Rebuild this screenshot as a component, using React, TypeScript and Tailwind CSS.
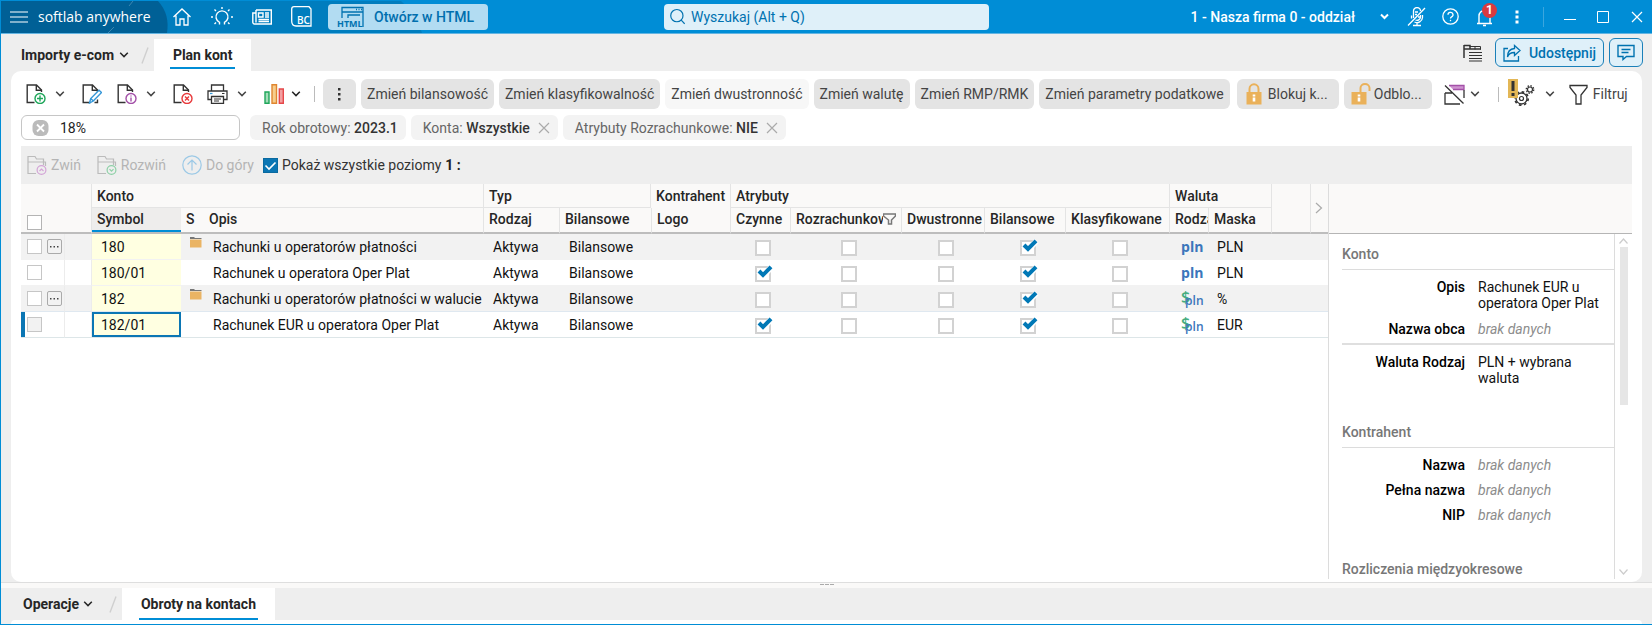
import React, { useState } from "react";

type Konto = {
  symbol: string;
  opis: string;
  grupa: boolean;
  czynne: boolean;
  waluta: "pln" | "obca";
  maska: string;
};

const KONTA: Konto[] = [
  { symbol: "180", opis: "Rachunki u operatorów płatności", grupa: true, czynne: false, waluta: "pln", maska: "PLN" },
  { symbol: "180/01", opis: "Rachunek u operatora Oper Plat", grupa: false, czynne: true, waluta: "pln", maska: "PLN" },
  { symbol: "182", opis: "Rachunki u operatorów płatności w walucie", grupa: true, czynne: false, waluta: "obca", maska: "%" },
  { symbol: "182/01", opis: "Rachunek EUR u operatora Oper Plat", grupa: false, czynne: true, waluta: "obca", maska: "EUR" },
];

const AKCJE = [
  { label: "Zmień bilansowość", disabled: false },
  { label: "Zmień klasyfikowalność", disabled: false },
  { label: "Zmień dwustronność", disabled: true },
  { label: "Zmień walutę", disabled: false },
  { label: "Zmień RMP/RMK", disabled: false },
  { label: "Zmień parametry podatkowe", disabled: false },
];

function Chevron({ className = "" }: { className?: string }) {
  return (
    <svg className={`shrink-0 ${className}`} width="10" height="8" viewBox="0 0 10 8" fill="none" stroke="currentColor" strokeWidth="1.5">
      <path d="M1.2 1.8 5 5.6 8.8 1.8" />
    </svg>
  );
}

function Close({ className = "" }: { className?: string }) {
  return (
    <svg className={`shrink-0 ${className}`} width="12" height="12" viewBox="0 0 12 12" fill="none" stroke="currentColor" strokeWidth="1.2">
      <path d="M1 1l10 10M11 1L1 11" />
    </svg>
  );
}

function DocIcon({ children }: { children: React.ReactNode }) {
  return (
    <svg width="20" height="20" viewBox="0 0 20 20" fill="none" strokeWidth="1.4">
      <path d="M8.5 18.5H1.2V1H10.5L15.5 6V8" stroke="#333" />
      <path d="M10.3 1V6.2H15.5" stroke="#333" />
      {children}
    </svg>
  );
}

function FolderIcon({ color, up }: { color: string; up?: boolean }) {
  return (
    <svg width="20" height="20" viewBox="0 0 20 20" fill="none" strokeWidth="1.2">
      <path d="M9 18.5H1V1.5H8L9.5 4H16.5V10M1 7H18.5V11" stroke="#bbb" />
      <circle cx="14.5" cy="15" r="4.4" stroke={color} />
      <path d={up ? "M12.5 16l2-2 2 2" : "M12.5 14.2l2 2 2-2"} stroke={color} />
    </svg>
  );
}

function Padlock({ open }: { open?: boolean }) {
  return (
    <svg className="shrink-0" width="20" height="22" viewBox="0 0 20 22" fill="none">
      <path d={open ? "M9.5 9V5a4.5 4 0 0 1 9 0v3" : "M3.5 9V6a4.5 4.7 0 0 1 9 0v3"} stroke="#eab15a" strokeWidth="2" />
      <rect x="0.5" y="9" width="15" height="12.5" fill="#eab15a" />
      <path d="M8 11.5v2M8 14.5v4" stroke="#fff" strokeWidth="2.6" />
    </svg>
  );
}

function Tick({ label, checked }: { label: string; checked?: boolean }) {
  return (
    <label className="relative inline-block h-4 w-4 align-middle">
      <input
        type="checkbox"
        aria-label={label}
        defaultChecked={checked}
        className="peer block h-4 w-4 appearance-none border-2 border-[#d2d2d2] bg-white"
      />
      <svg className="pointer-events-none absolute -top-1 left-0 hidden peer-checked:block" width="20" height="20" viewBox="0 0 20 20" fill="none">
        <path d="M3.5 9.5L8 14L16.5 5" stroke="#fff" strokeWidth="6" />
        <path d="M4 9L8 13L16 4.8" stroke="#0078b6" strokeWidth="4" />
      </svg>
    </label>
  );
}

function WalutaIcon({ rodzaj }: { rodzaj: "pln" | "obca" }) {
  if (rodzaj === "pln")
    return <span className="block font-['Open_Sans',sans-serif] text-sm leading-4 font-bold text-[#3b76bb]">pln</span>;
  return (
    <span className="relative block h-5 w-5 font-['Open_Sans',sans-serif]">
      <span className="absolute top-0 left-0 text-base leading-4 font-semibold text-[#45ad7e]">$</span>
      <span className="absolute top-1 left-1 text-xs leading-4 font-semibold text-[#3b76bb]">pln</span>
    </span>
  );
}

function Th({ children, className = "", colSpan }: { children?: React.ReactNode; className?: string; colSpan?: number }) {
  return (
    <th colSpan={colSpan} className={`h-6 overflow-hidden border-[#e4e4e4] px-[5px] text-left font-medium ${className}`}>
      {children}
    </th>
  );
}

function TopBar() {
  return (
    <header className="relative flex h-[34px] shrink-0 items-center border-b border-[#64b5e2] bg-[#008dd6] text-white">
      <svg className="absolute top-0 left-0" width="430" height="33" viewBox="0 0 430 33" fill="none">
        <path d="M0 1H400Q416 14 421 33H0Z" fill="#007dbe" />
        <path d="M0 1H157Q169 14 166 33H0Z" fill="#006096" />
        <path d="M132 1l-4 5M113 27l-6 6" stroke="#3d87b1" />
      </svg>
      <div className="relative flex flex-1 items-center pl-2">
        <button aria-label="Menu">
          <svg width="20" height="14" viewBox="0 0 20 14" stroke="#fff" strokeWidth="1.2">
            <path d="M1 2h18M1 7h18M1 12h18" />
          </svg>
        </button>
        <span className="ml-[9px] w-[125px] font-['Open_Sans',sans-serif] text-sm font-medium whitespace-nowrap">softlab anywhere</span>
        <div className="ml-[9px] flex items-center gap-[19px]">
          <button aria-label="Start">
            <svg width="20" height="20" viewBox="0 0 20 20" fill="none" stroke="#fff" strokeWidth="1.3">
              <path d="M1.5 10L10 2l8.5 8M4 8.5V18h4v-6h4v6h4V8.5" />
            </svg>
          </button>
          <button aria-label="Podpowiedzi">
            <svg width="22" height="20" viewBox="0 0 22 20" fill="none" stroke="#fff" strokeWidth="1.4">
              <path d="M8.5 17.5v-2.2a6 6 0 1 1 5 0v2.2" />
              <path d="M11 0v2M3.500 2.5l1.5 1.5M18.5 2.5L17 4M0 10h2M20 10h2M3.5 17l1.5-1.5M18.5 17L17 15.5" />
            </svg>
          </button>
          <button aria-label="Aktualności">
            <svg width="20" height="20" viewBox="0 0 20 20" fill="none" stroke="#fff" strokeWidth="1.4">
              <path d="M4 3h15.3v14H2.5A1.8 1.8 0 0 1 .8 15V6H4M4 3v12.5" />
              <path d="M6.5 6h4.5v4H6.5zM13 6h4M13 8h4M13 10h4M6.5 12.5h10.5M6.5 14.5h10.5" />
            </svg>
          </button>
          <button aria-label="BC">
            <svg width="21" height="21" viewBox="0 0 21 21" fill="none">
              <path d="M.7 3Q.7.7 3 .7H18L20 3V20H5Q.7 20 .7 15Z" stroke="#fff" strokeWidth="1.3" />
              <text x="6" y="17.5" fontSize="10" fontFamily="Open Sans" fontWeight="600" fill="#fff">BC</text>
            </svg>
          </button>
        </div>
        <button className="ml-4 flex h-[26px] w-40 items-center gap-2 rounded bg-[#b2dcf2] pl-[9px] text-sm font-medium text-[#006fae]">
          <svg width="29" height="22" viewBox="0 0 29 22" fill="none" stroke="#0072b0" strokeWidth="1.3">
            <path d="M5 12V1.5H26V21M5 6H26M19 3.5h1M21.5 3.5h1M24 3.5h1M11 12V9H23" />
            <text x="0" y="20.5" fontSize="9" fontFamily="Open Sans" fontWeight="700" fill="#0072b0" stroke="none">HTML</text>
          </svg>
          Otwórz w HTML
        </button>
      </div>
      <label className="relative flex h-[26px] w-[325px] items-center rounded bg-[#dff0f9] text-[#0072b0]">
        <svg className="mx-1.5" width="17" height="18" viewBox="0 0 17 18" fill="none" stroke="currentColor" strokeWidth="1.3">
          <circle cx="7.5" cy="7.5" r="6.7" />
          <path d="M12.3 12.5L16 16.5" />
        </svg>
        <input
          aria-label="Wyszukaj"
          placeholder="Wyszukaj (Alt + Q)"
          className="w-full bg-transparent text-sm outline-none placeholder:text-[#0072b0]"
        />
      </label>
      <div className="flex flex-1 items-center justify-end pr-[9px]">
        <button className="flex items-center gap-[25px] text-sm font-medium">
          1 - Nasza firma 0 - oddział
          <svg width="9" height="7" viewBox="0 0 9 7" fill="none" stroke="#fff" strokeWidth="2">
            <path d="M1 1.5L4.5 5 8 1.5" />
          </svg>
        </button>
        <button aria-label="Mikrofon" className="ml-[18px]">
          <svg width="19" height="20" viewBox="0 0 19 20" fill="none" stroke="#fff" strokeWidth="1.3">
            <path d="M1 18.5L18 1" />
            <path d="M6.5 11V4a3.5 3.5 0 0 1 7 0M13.5 8v2a3.5 3.5 0 0 1-5 3M4.5 8.5v3M15.5 8v2.5a5.5 5.5 0 0 1-8 4.5M10 16v2.5M6 18.5h8" />
            <path d="M8 5h3M8 7.5h2M11 10h2" />
          </svg>
        </button>
        <button aria-label="Pomoc" className="ml-4">
          <svg width="17" height="17" viewBox="0 0 17 17" fill="none" stroke="#fff" strokeWidth="1.3">
            <circle cx="8.5" cy="8.5" r="7.7" />
            <path d="M6 6.8a2.5 2.3 0 1 1 3.6 2Q8.5 9.3 8.5 10.5" />
            <path d="M8.5 11.8v1.4" />
          </svg>
        </button>
        <button aria-label="Powiadomienia" className="relative ml-[17px]">
          <svg width="17" height="20" viewBox="0 0 17 20" fill="none" stroke="#fff" strokeWidth="1.4">
            <path d="M1 16.5h15M3 16.5V9a5.5 5.5 0 0 1 11 0v7.5M7 18.5h3" />
          </svg>
          <span className="absolute -top-1 left-1.5 flex h-[15px] w-[15px] items-center justify-center rounded-full bg-[#d93a3f] text-xs leading-none font-bold">
            1
          </span>
        </button>
        <button aria-label="Więcej" className="ml-[22px]">
          <svg width="4" height="14" viewBox="0 0 4 14" fill="#fff">
            <path d="M.5.5h3v3h-3zM.5 5.5h3v3h-3zM.5 10.5h3v3h-3z" />
          </svg>
        </button>
        <span className="ml-6 h-5 w-px bg-[#3ba6de]" />
        <button aria-label="Minimalizuj" className="ml-5">
          <svg width="12" height="12" viewBox="0 0 12 12" stroke="#fff">
            <path d="M0 8.5h12" />
          </svg>
        </button>
        <button aria-label="Maksymalizuj" className="ml-[21px]">
          <svg width="12" height="12" viewBox="0 0 12 12" fill="none" stroke="#fff">
            <path d="M.5.5h11v11H.5z" />
          </svg>
        </button>
        <button aria-label="Zamknij" className="ml-[22px]">
          <Close />
        </button>
      </div>
    </header>
  );
}

function Slash() {
  return (
    <svg width="8" height="17" viewBox="0 0 8 17" stroke="#cfcfcf" strokeWidth="1.4">
      <path d="M1 16.5L7 .5" />
    </svg>
  );
}

function PageTabs() {
  return (
    <nav className="flex h-[37px] shrink-0 items-end pr-[9px] pl-5">
      <button className="flex h-8 items-center gap-[5px] text-sm font-bold text-[#262626]">
        Importy e-com
        <Chevron />
      </button>
      <span className="ml-3 flex h-8 w-[13px] items-center">
        <Slash />
      </span>
      <button className="flex h-8 w-[97px] flex-col items-center justify-end bg-white pb-0.5 text-sm font-bold text-[#262626]">
        <span className="border-b-2 border-[#008dd6] px-[3px] pb-0.5">Plan kont</span>
      </button>
      <div className="ml-auto flex h-[37px] items-center gap-[5px]">
        <button aria-label="Układ" className="mr-2">
          <svg width="19" height="18" viewBox="0 0 19 18" fill="none" stroke="#333">
            <path d="M6.500 2.5H12V5.5M12 2.5H17.5V5.5M6 8.5h13M6 11.5h13M6 14.5h13M6 17h13" />
            <path d="M1 1.5h6v3.500M1 5h17M1 1v13" strokeWidth="1.5" />
          </svg>
        </button>
        <button className="flex h-[29px] items-center gap-2 rounded-md border border-[#1b80b9] bg-[#dff0f9] px-[7px] text-sm font-medium text-[#0072b0]">
          <svg width="18" height="18" viewBox="0 0 18 18" fill="none" stroke="currentColor" strokeWidth="1.3">
            <path d="M5 4.5H1V17H15.5V12" />
            <path d="M11.5 1.5L17 6.5L11.5 11.5V8.5Q6 8.5 4.5 13Q4.5 5 11.5 4.5Z" />
          </svg>
          Udostępnij
        </button>
        <button aria-label="Komentarze" className="flex h-[29px] w-[34px] items-center justify-center rounded-md border border-[#1b80b9] bg-[#dff0f9] text-[#0072b0]">
          <svg width="18" height="17" viewBox="0 0 18 17" fill="none" stroke="currentColor" strokeWidth="1.4">
            <path d="M1 1.5H17V12.5H9.5L6 15.5V12.5H1ZM4.5 5.5h9M4.5 8.5h7" />
          </svg>
        </button>
      </div>
    </nav>
  );
}

function Toolbar() {
  return (
    <div className="flex h-[30px] items-center text-sm whitespace-nowrap text-[#444]">
      <div className="flex w-[291px] shrink-0 items-center pl-[5px]">
        <button aria-label="Dodaj" className="flex items-center gap-[9px]">
          <DocIcon>
            <circle cx="14" cy="14.5" r="5" stroke="#1ea65a" />
            <path d="M14 11.5v6M11 14.5h6" stroke="#1ea65a" />
          </DocIcon>
          <Chevron />
        </button>
        <button aria-label="Edytuj" className="ml-[17px]">
          <DocIcon>
            <path d="M12.500 18.500h3v-3" stroke="#333" />
            <path d="M7.500 19l1.200-4.500 8.300-8.300 2.500 2.300-8.200 8.500z" stroke="#3597d8" fill="#fff" />
            <path d="M8.700 14.500l2.600 2.500" stroke="#3597d8" />
          </DocIcon>
        </button>
        <button aria-label="Informacje" className="ml-[15px] flex items-center gap-[9px]">
          <DocIcon>
            <circle cx="14" cy="14.5" r="5" stroke="#a350a8" />
            <path d="M14 11.5v1M14 13.5v4" stroke="#a350a8" />
          </DocIcon>
          <Chevron />
        </button>
        <button aria-label="Usuń" className="ml-[17px]">
          <DocIcon>
            <circle cx="14" cy="14.5" r="5" stroke="#e8393b" />
            <path d="M12 12.5l4 4M16 12.5l-4 4" stroke="#e8393b" />
          </DocIcon>
        </button>
        <button aria-label="Drukuj" className="ml-[14px] flex items-center gap-[9px]">
          <svg width="21" height="20" viewBox="0 0 21 20" fill="none" stroke="#333" strokeWidth="1.3">
            <path d="M4.5 7V1H16.5V7M4 15.5H1V7H20V15.5H17M4.5 12.5H16.5V19.3H4.5Z" />
            <path d="M7 15h7M7 17h5M15 9.5h2.5" strokeWidth="1" />
            <path d="M3 9.5h2.5" stroke="#3597d8" />
          </svg>
          <Chevron />
        </button>
        <button aria-label="Wykresy" className="ml-[17px] flex items-center gap-[6px]">
          <svg width="21" height="20" viewBox="0 0 21 20" strokeWidth="1.4">
            <path d="M1 8h4v11.3H1z" fill="#a5dcb9" stroke="#1ea65a" />
            <path d="M8 .7h4.5v18.6H8z" fill="#f6cd8c" stroke="#e0852f" />
            <path d="M15.3 5h4v14.3h-4z" fill="#f3a0a1" stroke="#e5484a" />
          </svg>
          <Chevron className="text-[#222]" />
        </button>
      </div>
      <span className="mx-0.5 h-4 w-px bg-[#bbb]" />
      <div className="ml-[6px] flex items-center gap-[5px]">
        <button aria-label="Więcej akcji" className="flex h-[30px] w-[33px] items-center justify-center rounded-md bg-[#e4e4e4]">
          <svg width="3" height="13" viewBox="0 0 3 13" fill="#333">
            <path d="M0 0h2.5v2.5H0zM0 5h2.5v2.5H0zM0 10h2.5v2.5H0z" />
          </svg>
        </button>
        {AKCJE.map((a) => (
          <button
            key={a.label}
            disabled={a.disabled}
            className={`h-[30px] rounded-md px-[6px] ${a.disabled ? "bg-[#f7f7f7]" : "bg-[#e4e4e4]"}`}
          >
            {a.label}
          </button>
        ))}
        <button className="ml-0.5 flex h-[30px] w-[102px] items-center gap-[2px] rounded-md bg-[#e4e4e4] pl-[9px]">
          <Padlock />
          Blokuj k...
        </button>
        <button className="flex h-[30px] w-[88px] items-center gap-[3px] rounded-md bg-[#e4e4e4] pl-[7px]">
          <Padlock open />
          Odblo...
        </button>
      </div>
      <button aria-label="Okna" className="ml-3 flex items-center gap-[5px]">
        <svg width="21" height="21" viewBox="0 0 21 21" fill="none" stroke="#333" strokeWidth="1.3">
          <path d="M5 1.5H20V5.5H9" fill="#cf93d0" stroke="#a350a8" />
          <path d="M20 6V14M1 9V20H16M1 9H8M1 1.5L19.5 19.5" />
        </svg>
        <Chevron />
      </button>
      <span className="ml-[18px] h-[15px] w-px bg-[#bbb]" />
      <button aria-label="Ustawienia" className="relative ml-[9px] flex items-center gap-[9px]">
        <svg width="28" height="30" viewBox="0 0 28 30" fill="none" stroke="#333">
          <circle cx="13.5" cy="19.5" r="5.5" strokeWidth="1.3" />
          <circle cx="13.5" cy="19.5" r="6.7" strokeWidth="1.7" strokeDasharray="2.6 2.66" />
          <circle cx="13.5" cy="19.5" r="2" strokeWidth="1.2" />
          <circle cx="22" cy="10.5" r="2.5" strokeWidth="1.2" />
          <circle cx="22" cy="10.5" r="3.7" strokeWidth="1.4" strokeDasharray="1.45 1.45" />
          <path d="M0 0h10v19H0z" fill="#e3b756" stroke="none" />
          <path d="M5 2v10M5 14v3" strokeWidth="3" />
        </svg>
        <Chevron />
      </button>
      <button className="ml-[14px] flex items-center gap-[5px]">
        <svg width="19" height="21" viewBox="0 0 19 21" fill="none" stroke="#333" strokeWidth="1.3">
          <path d="M1 1.5H18V3.5L12 11V20H7V11L1 3.5Z" />
        </svg>
        Filtruj
      </button>
    </div>
  );
}

function Chip({ name, value, closable }: { name: string; value: string; closable?: boolean }) {
  return (
    <span className="flex h-[25px] items-center rounded-md bg-[#f3f3f3] pr-2 pl-3 text-sm whitespace-pre text-[#666]">
      {name}: <span className="font-medium text-[#333]">{value}</span>
      {closable && (
        <button aria-label={`Usuń filtr ${name}`} className="ml-2 text-[#aaa]">
          <Close />
        </button>
      )}
    </span>
  );
}

function Filters() {
  const [query, setQuery] = useState("18%");

  return (
    <div className="mt-[6px] flex items-center gap-[5px]">
      <div className="mr-[5px] flex h-[25px] w-[219px] items-center rounded-md border border-[#c6c6c6] bg-white pl-2.5">
        <button aria-label="Wyczyść" onClick={() => setQuery("")}>
          <svg width="17" height="16" viewBox="0 0 17 16">
            <rect x=".5" width="16" height="16" rx="6" fill="#bbb" />
            <path d="M5 4.5l7 7M12 4.5l-7 7" stroke="#fff" strokeWidth="1.8" />
          </svg>
        </button>
        <input
          aria-label="Szukaj konta"
          value={query}
          onChange={(e) => setQuery(e.target.value)}
          className="ml-[11px] w-full min-w-0 bg-transparent text-sm text-[#222] outline-none"
        />
      </div>
      <Chip name="Rok obrotowy" value="2023.1" />
      <Chip name="Konta" value="Wszystkie" closable />
      <Chip name="Atrybuty Rozrachunkowe" value="NIE" closable />
    </div>
  );
}

function LevelBar() {
  return (
    <div className="mt-[6px] flex h-[38px] shrink-0 items-center bg-[#eee] pl-[6px] text-sm text-[#b4b4b4]">
      <button disabled className="flex items-center gap-1">
        <FolderIcon color="#d3a4d6" up />
        Zwiń
      </button>
      <button disabled className="ml-4 flex items-center gap-1">
        <FolderIcon color="#8ed0a7" />
        Rozwiń
      </button>
      <button disabled className="ml-4 flex items-center gap-1">
        <svg width="20" height="20" viewBox="0 0 20 20" fill="none" stroke="#9cc9e6" strokeWidth="1.2">
          <circle cx="10" cy="10" r="9.2" />
          <path d="M10 15.5V5M5.5 9.5L10 5l4.5 4.5" />
        </svg>
        Do góry
      </button>
      <label className="ml-[9px] flex items-center gap-1 text-[#333]">
        <span className="relative block h-[15px] w-[15px]">
          <input type="checkbox" defaultChecked className="block h-[15px] w-[15px] appearance-none border border-[#0a6aa0] bg-[#0b76b4]" />
          <svg className="pointer-events-none absolute inset-0" width="15" height="15" viewBox="0 0 15 15" fill="none" stroke="#fff" strokeWidth="1.6">
            <path d="M2.5 7.5L6 11L12.5 4.5" />
          </svg>
        </span>
        Pokaż wszystkie poziomy
      </label>
      <span className="ml-1 font-bold text-[#222]">1 :</span>
    </div>
  );
}

function AccountsTable() {
  return (
    <div className="min-w-0 flex-1">
      <table className="w-full table-fixed border-separate border-spacing-0 text-sm whitespace-nowrap">
        <colgroup>
          <col className="w-[44px]" />
          <col className="w-[27px]" />
          <col className="w-[89px]" />
          <col className="w-[23px]" />
          <col className="w-[280px]" />
          <col className="w-[76px]" />
          <col className="w-[91px]" />
          <col className="w-[80px]" />
          <col className="w-[60px]" />
          <col className="w-[111px]" />
          <col className="w-[83px]" />
          <col className="w-[81px]" />
          <col className="w-[104px]" />
          <col className="w-[39px]" />
          <col className="w-[63px]" />
          <col />
          <col className="w-[17px]" />
        </colgroup>
        <thead className="bg-[#faf9f8] text-[#262626]">
          <tr>
            <th colSpan={2} rowSpan={2} className="border-r border-b-2 border-r-[#e4e4e4] border-b-[#bdbdbd] px-[6px] pb-[2px] text-left align-bottom">
              <input type="checkbox" aria-label="Zaznacz wszystkie" className="block h-[15px] w-[15px] appearance-none border border-[#b4b4b4] bg-white" />
            </th>
            <Th colSpan={3} className="border-r border-b">Konto</Th>
            <Th colSpan={2} className="border-r border-b">Typ</Th>
            <Th className="border-r">Kontrahent</Th>
            <Th colSpan={5} className="border-r border-b">Atrybuty</Th>
            <Th colSpan={2} className="border-r border-b">Waluta</Th>
            <th rowSpan={2} className="border-r border-b-2 border-r-[#e4e4e4] border-b-[#bdbdbd]" />
            <th rowSpan={2} className="border-b-2 border-b-[#bdbdbd]">
              <button aria-label="Zwiń panel" className="block pl-1 text-[#aaa]">
                <svg width="8" height="12" viewBox="0 0 8 12" fill="none" stroke="currentColor" strokeWidth="1.2">
                  <path d="M1 1l5.5 5L1 11" />
                </svg>
              </button>
            </th>
          </tr>
          <tr className="[&>th]:h-[26px] [&>th]:border-b-2 [&>th]:border-b-[#bdbdbd] [&>th]:pb-[2px]">
            <Th className="bg-[#eeedec] shadow-[inset_0_-2px_0_#008dd6]">Symbol</Th>
            <Th>S</Th>
            <Th className="border-r">Opis</Th>
            <Th className="border-r">Rodzaj</Th>
            <Th>Bilansowe</Th>
            <Th className="border-x">Logo</Th>
            <Th className="border-r">Czynne</Th>
            <Th className="border-r">
              <span className="flex items-center justify-between">
                <span className="w-[88px] overflow-hidden">Rozrachunkowe</span>
                <svg className="shrink-0" width="13" height="12" viewBox="0 0 13 12" fill="none" stroke="#777" strokeWidth="1.5">
                  <path d="M.5 1H12.5V3L8.5 7V11H5.5V7L.5 3Z" />
                </svg>
              </span>
            </Th>
            <Th className="border-r">Dwustronne</Th>
            <Th className="border-r">Bilansowe</Th>
            <Th className="border-r">Klasyfikowane</Th>
            <Th className="border-r">Rodzaj</Th>
            <Th className="border-r">Maska</Th>
          </tr>
        </thead>
        <tbody className="text-[#111]">
          {KONTA.map((k, index) => {
            const active = index === KONTA.length - 1;

            return (
              <tr
                key={k.symbol}
                className={`[&>td]:h-[26px] [&>td]:border-b [&>td]:p-0 ${
                  active
                    ? "[&>td]:border-b-[#dde6e8]"
                    : index === 2
                    ? "bg-[#f2f2f2] [&>td]:border-b-[#dfe8f0]"
                    : k.grupa
                    ? "bg-[#f2f2f2] [&>td]:border-b-[#f2f2f2]"
                    : "[&>td]:border-b-[#f2f2f2]"
                }`}
              >
                <td className={`border-r border-r-[#ececec] ${active ? "shadow-[inset_4px_0_0_#0b76b4]" : ""}`}>
                  <span className="flex items-center gap-[5px] pl-[6px]">
                    <input
                      type="checkbox"
                      aria-label={`Zaznacz ${k.symbol}`}
                      className={`block h-[15px] w-[15px] appearance-none border border-[#c6c6c6] ${active ? "bg-[#f2f2f2]" : "bg-white"}`}
                    />
                    {k.grupa && (
                      <button aria-label="Rozwiń" className="flex h-[15px] w-[15px] items-center justify-center rounded-xs border border-[#aaa]">
                        <svg width="9" height="2" viewBox="0 0 9 2" fill="#444">
                          <path d="M0 0h1.5v1.5H0zM3.5 0H5v1.5H3.5zM7 0h1.5v1.5H7z" />
                        </svg>
                      </button>
                    )}
                  </span>
                </td>
                <td className="border-r border-r-[#ececec]" />
                <td className="bg-[#ffffe1]">
                  <span className={`flex h-[25px] items-center pl-[9px] ${active ? "shadow-[inset_0_0_0_2px_#0b76b4]" : ""}`}>{k.symbol}</span>
                </td>
                <td className="align-top">
                  {k.grupa && (
                    <svg className="mt-[3px] ml-[9px]" width="12" height="11" viewBox="0 0 12 11">
                      <path d="M0 0h4l1 1h6.5v1H0z" fill="#777" />
                      <path d="M0 2.5h11.5v8H0z" fill="#eab464" />
                    </svg>
                  )}
                </td>
                <td>
                  <span className="pl-[9px]">{k.opis}</span>
                </td>
                <td>
                  <span className="pl-[9px]">Aktywa</span>
                </td>
                <td>
                  <span className="pl-[9px]">Bilansowe</span>
                </td>
                <td />
                <td className="text-center">
                  <span className="pl-1"><Tick label="Czynne" checked={k.czynne} /></span>
                </td>
                <td className="text-center">
                  <span className="pl-1"><Tick label="Rozrachunkowe" /></span>
                </td>
                <td className="text-center">
                  <span className="pl-1"><Tick label="Dwustronne" /></span>
                </td>
                <td className="text-center">
                  <span className="pl-1"><Tick label="Bilansowe" checked /></span>
                </td>
                <td className="text-center">
                  <span className="pl-1"><Tick label="Klasyfikowane" /></span>
                </td>
                <td>
                  <div className="pl-[11px]">
                    <WalutaIcon rodzaj={k.waluta} />
                  </div>
                </td>
                <td>
                  <span className="pl-2">{k.maska}</span>
                </td>
                <td />
                <td />
              </tr>
            );
          })}
        </tbody>
      </table>
    </div>
  );
}

function Detail({ label, value }: { label: string; value?: string }) {
  return (
    <div className="flex gap-[13px] leading-4">
      <dt className="w-[123px] shrink-0 text-right font-medium text-black">{label}</dt>
      <dd className={value ? "text-[#111]" : "text-[#8c8c8c] italic"}>{value ?? "brak danych"}</dd>
    </div>
  );
}

function DetailsPanel() {
  return (
    <aside className="flex w-[304px] shrink-0 flex-col border-l border-[#dcdcdc] text-sm">
      <div className="h-[50px] shrink-0 border-b border-[#b5b5b5] bg-[#faf9f8]" />
      <div className="flex min-h-0 flex-1">
        <div className="min-h-0 flex-1 overflow-hidden border-r border-[#dcdcdc] pl-[13px]">
          <h2 className="border-b border-[#dcdcdc] pt-3 pb-[7px] leading-4 font-medium text-[#777]">Konto</h2>
          <dl className="flex flex-col gap-[10px] pt-[9px] pb-[6px]">
            <Detail label="Opis" value="Rachunek EUR u operatora Oper Plat" />
            <Detail label="Nazwa obca" />
          </dl>
          <dl className="border-t-2 border-[#dfdfdf] pt-[9px]">
            <Detail label="Waluta Rodzaj" value="PLN + wybrana waluta" />
          </dl>
          <h2 className="mt-[38px] border-b border-[#dcdcdc] pb-[7px] leading-4 font-medium text-[#777]">Kontrahent</h2>
          <dl className="flex flex-col gap-[9px] pt-[9px]">
            <Detail label="Nazwa" />
            <Detail label="Pełna nazwa" />
            <Detail label="NIP" />
          </dl>
          <h2 className="mt-[38px] leading-4 font-medium text-[#777]">Rozliczenia międzyokresowe</h2>
        </div>
        <div className="flex w-[17px] flex-col items-center justify-between pt-1 pb-1 text-[#ccc]">
          <div className="flex flex-col items-center gap-[3px]">
            <svg width="9" height="6" viewBox="0 0 9 6" fill="none" stroke="currentColor" strokeWidth="1.2">
              <path d="M.5 5.5L4.5 1l4 4.5" />
            </svg>
            <span className="h-[158px] w-2 bg-[#e6e6e6]" />
          </div>
          <svg width="9" height="6" viewBox="0 0 9 6" fill="none" stroke="currentColor" strokeWidth="1.2">
            <path d="M.5.5L4.5 5l4-4.5" />
          </svg>
        </div>
      </div>
    </aside>
  );
}

function BottomTabs() {
  return (
    <div className="shrink-0">
      <div className="flex h-[6px] justify-center gap-px border-t border-[#dedede] bg-[#faf9f8] pt-px">
        <span className="h-px w-1 bg-[#aaa]" />
        <span className="h-px w-1 bg-[#aaa]" />
        <span className="h-px w-1 bg-[#aaa]" />
      </div>
      <nav className="flex h-8 pl-[22px] text-sm font-bold text-[#262626]">
        <button className="flex items-center gap-1">
          Operacje
          <Chevron />
        </button>
        <span className="flex w-[29px] items-center justify-end pr-[5px]">
          <Slash />
        </span>
        <button className="flex w-[153px] flex-col items-center justify-end bg-white">
          <span className="border-b-2 border-[#008dd6] px-[2px] pb-1">Obroty na kontach</span>
        </button>
      </nav>
      <div className="mx-[10px] h-1 rounded-t-xl bg-white" />
    </div>
  );
}

export default function App() {
  return (
    <div className="flex h-screen flex-col overflow-hidden border-b border-l border-[#008dd6] bg-[#eee] font-[Roboto,sans-serif]">
      <TopBar />
      <PageTabs />
      <main className="mr-[10px] ml-[10px] flex min-h-0 flex-1 flex-col rounded-[10px] bg-white px-[10px] pt-2 pb-[3px]">
        <Toolbar />
        <Filters />
        <LevelBar />
        <div className="flex min-h-0 flex-1">
          <AccountsTable />
          <DetailsPanel />
        </div>
      </main>
      <BottomTabs />
    </div>
  );
}
